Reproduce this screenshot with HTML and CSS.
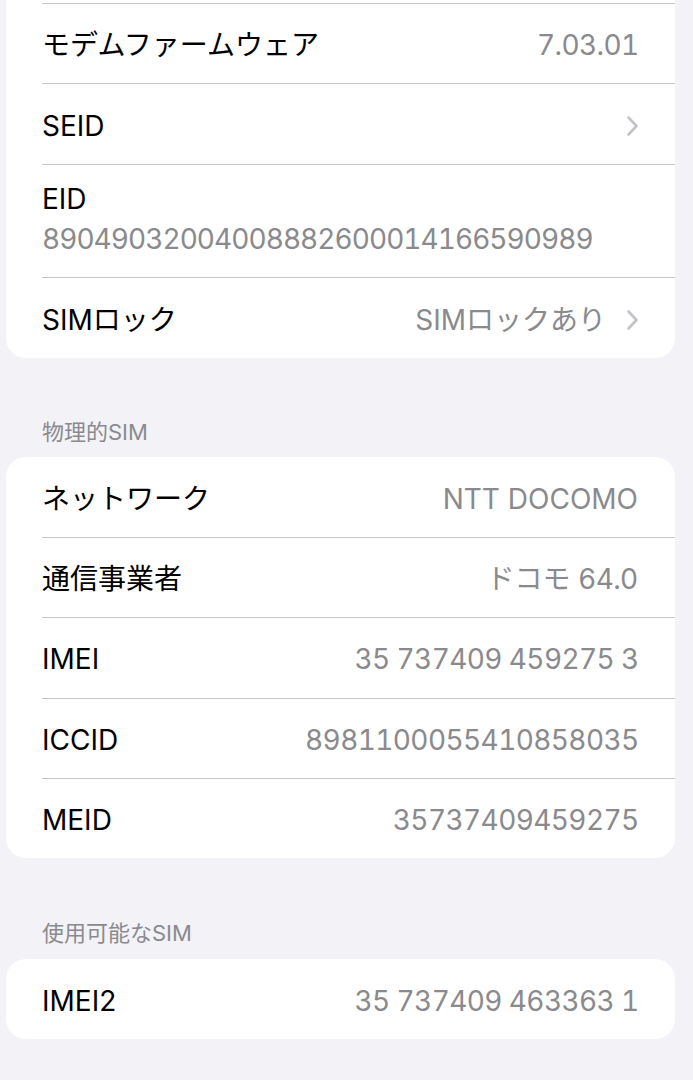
FILE: index.html
```html
<!DOCTYPE html>
<html lang="ja">
<head>
<meta charset="utf-8">
<title>情報</title>
<link rel="stylesheet" href="styles.css">
</head>
<body>
<main class="page">
  <section class="card card-cont">
    <div class="row first-cont">
      <span class="label">モデムファームウェア</span>
      <span class="value num">7.03.01</span>
    </div>
    <div class="row">
      <span class="label">SEID</span>
      <span class="value"><svg class="chev" viewBox="0 0 13 22" width="13" height="22"><path d="M2.5 2.5 L10.5 11 L2.5 19.5"/></svg></span>
    </div>
    <div class="row row-stack">
      <span class="label">EID</span>
      <span class="value num num-eid">89049032004008882600014166590989</span>
    </div>
    <div class="row">
      <span class="label">SIMロック</span>
      <span class="value">SIMロックあり<svg class="chev" viewBox="0 0 13 22" width="13" height="22"><path d="M2.5 2.5 L10.5 11 L2.5 19.5"/></svg></span>
    </div>
  </section>

  <h2 class="section-title">物理的SIM</h2>
  <section class="card">
    <div class="row">
      <span class="label">ネットワーク</span>
      <span class="value">NTT DOCOMO</span>
    </div>
    <div class="row">
      <span class="label">通信事業者</span>
      <span class="value">ドコモ 64.0</span>
    </div>
    <div class="row">
      <span class="label">IMEI</span>
      <span class="value num">35 737409 459275 3</span>
    </div>
    <div class="row">
      <span class="label">ICCID</span>
      <span class="value num">8981100055410858035</span>
    </div>
    <div class="row">
      <span class="label">MEID</span>
      <span class="value num">35737409459275</span>
    </div>
  </section>

  <h2 class="section-title second">使用可能なSIM</h2>
  <section class="card">
    <div class="row">
      <span class="label">IMEI2</span>
      <span class="value num">35 737409 463363 1</span>
    </div>
  </section>
</main>
</body>
</html>
```

FILE: styles.css
```css
html, body {
  margin: 0;
  padding: 0;
  background: #f2f2f7;
}

body {
  font-family: "Inter", "Noto Sans CJK JP", sans-serif;
  -webkit-font-smoothing: antialiased;
}

.page {
  padding: 0 18px 0 6px;
  display: flex;
  flex-direction: column;
}

.card {
  background: #ffffff;
  border-radius: 20px;
  overflow: hidden;
}

.card-cont {
  border-top-left-radius: 0;
  border-top-right-radius: 0;
  padding-top: 3px;
}

.row {
  box-sizing: border-box;
  height: 80.25px;
  margin-left: 36px;
  padding-top: 3px;
  padding-right: 37px;
  display: flex;
  align-items: center;
  justify-content: space-between;
  font-size: 28px;
  line-height: 34px;
}

.card > .row:first-child {
  height: 80px;
}

.card-cont > .row {
  height: 81px;
}

.row + .row,
.first-cont {
  border-top: 1px solid #c8c8cc;
}

.card-cont > .first-cont {
  height: 80px;
}

.card-cont > .row-stack {
  height: 113px;
  flex-direction: column;
  align-items: flex-start;
  justify-content: flex-start;
  padding-top: 17px;
  gap: 6px;
}

.label {
  color: #000000;
  white-space: nowrap;
}

.value {
  color: #8a8a8e;
  white-space: nowrap;
  display: flex;
  align-items: center;
}

.num {
  font-variant-numeric: tabular-nums;
  letter-spacing: -0.6px;
  margin-right: -0.6px;
}

.num-eid {
  letter-spacing: -0.95px;
}

.chev {
  margin-left: 20px;
  margin-right: -1px;
  fill: none;
  stroke: #c4c4c8;
  stroke-width: 2.6;
  stroke-linecap: round;
  stroke-linejoin: round;
}

.section-title {
  margin: 61px 0 12px 36px;
  font-size: 22px;
  line-height: 26px;
  font-weight: 400;
  color: #8a8a8e;
}

.section-title.second {
  margin-top: 62px;
  margin-bottom: 13px;
}
```
